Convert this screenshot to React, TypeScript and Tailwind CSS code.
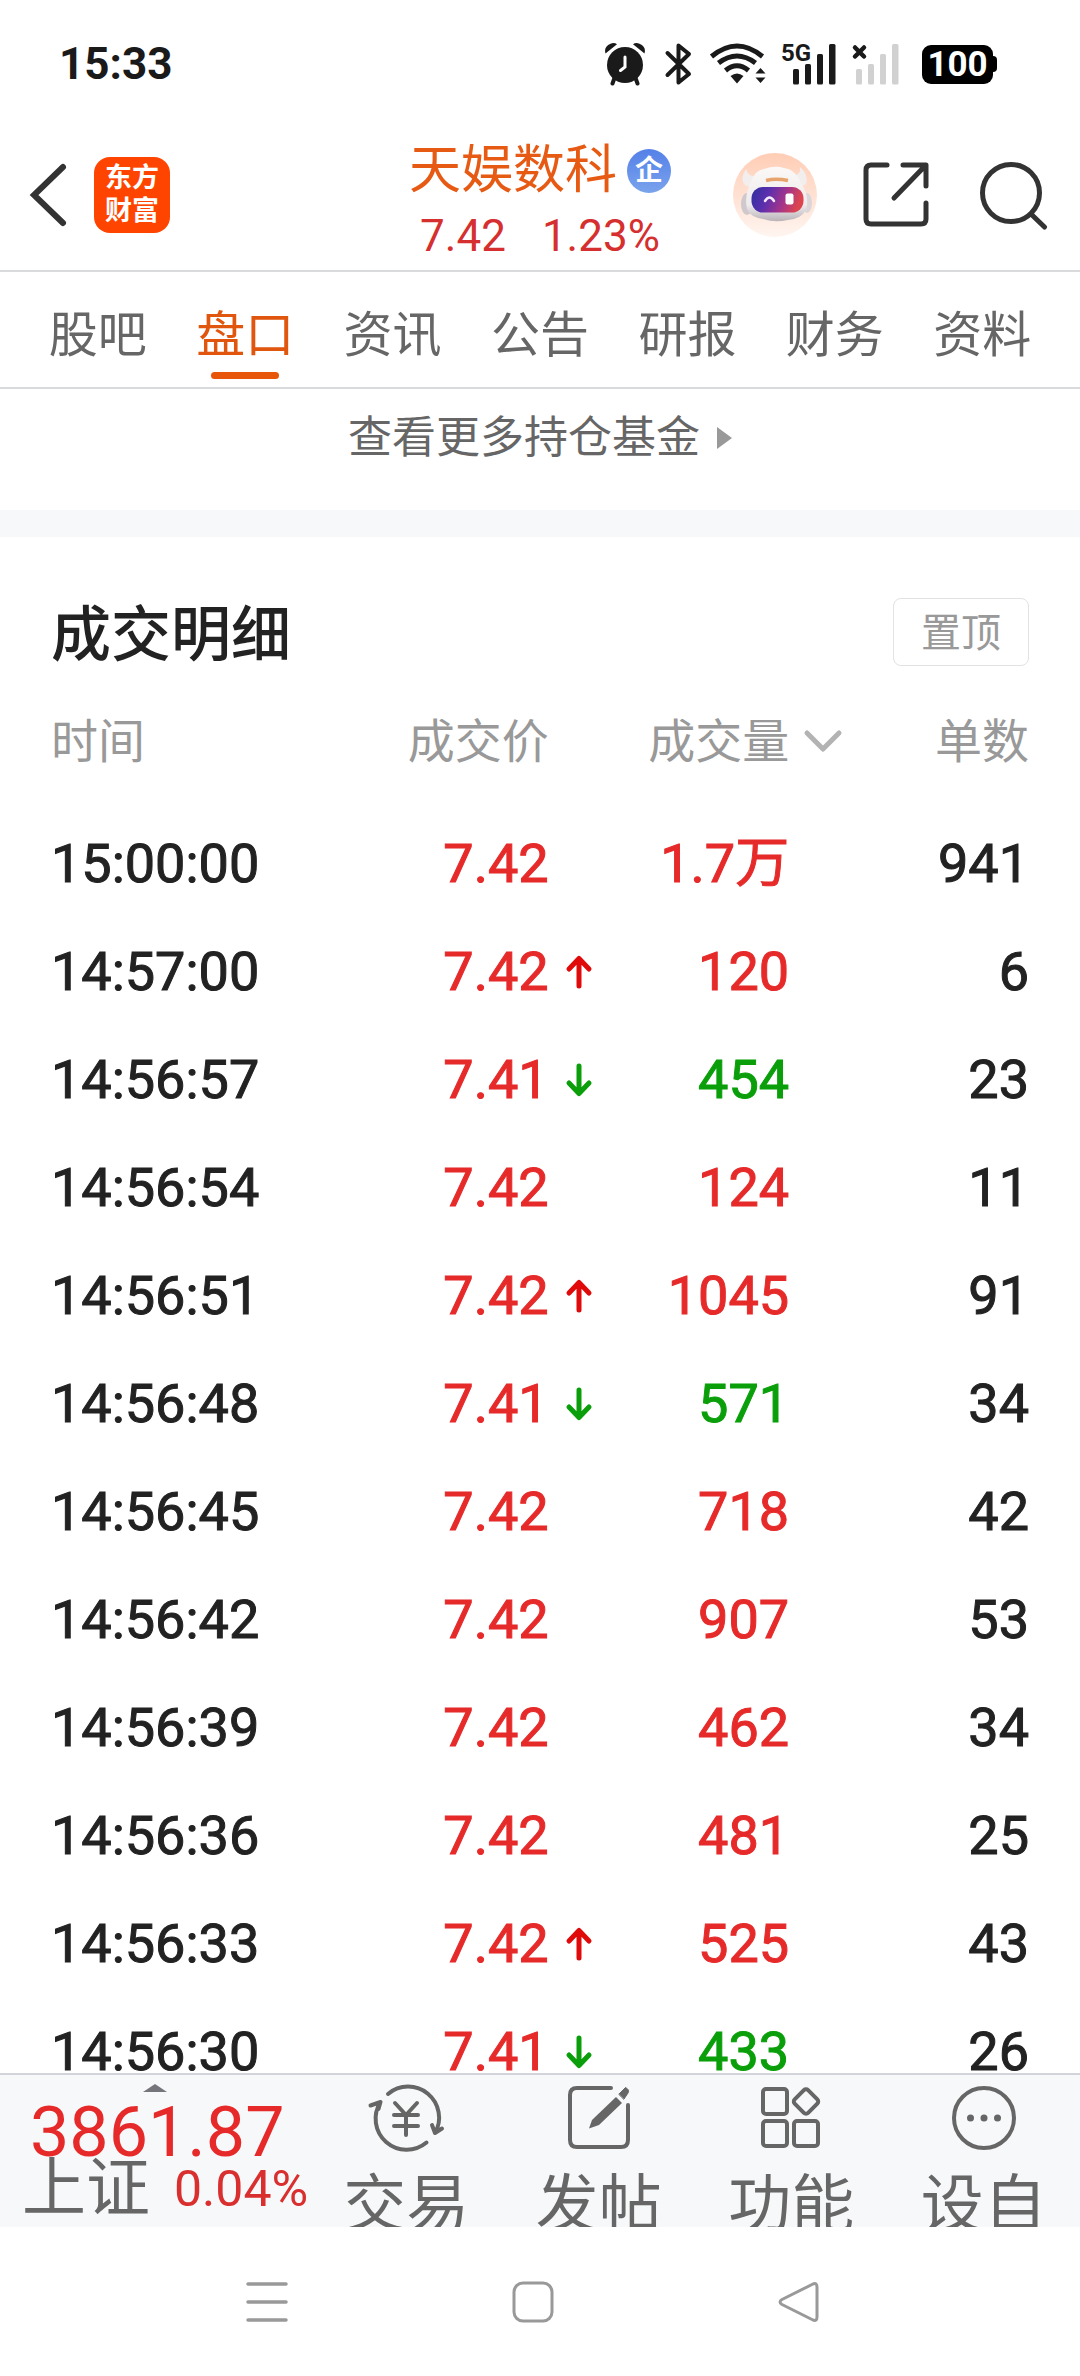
import type { ReactNode } from "react";

const FONT = "font-[Roboto,'Noto_Sans_CJK_SC',sans-serif]";

type Move = "up" | "down" | "flat";

interface Trade {
  time: string;
  price: string;
  move: Move;
  volume: string;
  sell?: boolean;
  count: number;
}

const trades: Trade[] = [
  { time: "15:00:00", price: "7.42", move: "flat", volume: "1.7万", count: 941 },
  { time: "14:57:00", price: "7.42", move: "up", volume: "120", count: 6 },
  { time: "14:56:57", price: "7.41", move: "down", volume: "454", sell: true, count: 23 },
  { time: "14:56:54", price: "7.42", move: "flat", volume: "124", count: 11 },
  { time: "14:56:51", price: "7.42", move: "up", volume: "1045", count: 91 },
  { time: "14:56:48", price: "7.41", move: "down", volume: "571", sell: true, count: 34 },
  { time: "14:56:45", price: "7.42", move: "flat", volume: "718", count: 42 },
  { time: "14:56:42", price: "7.42", move: "flat", volume: "907", count: 53 },
  { time: "14:56:39", price: "7.42", move: "flat", volume: "462", count: 34 },
  { time: "14:56:36", price: "7.42", move: "flat", volume: "481", count: 25 },
  { time: "14:56:33", price: "7.42", move: "up", volume: "525", count: 43 },
  { time: "14:56:30", price: "7.41", move: "down", volume: "433", sell: true, count: 26 },
];

const tabs = ["股吧", "盘口", "资讯", "公告", "研报", "财务", "资料"];

function AlarmIcon() {
  return (
    <svg width="42" height="44" viewBox="0 0 42 44" fill="#1a1a1a" aria-hidden="true">
      <circle cx="21" cy="23" r="18" />
      <path d="M1.5 11.5Q-.5 5 6.500 1.800Q10 0 13 2.200Z" />
      <path d="M40.500 11.500Q42.500 5 35.500 1.800Q32 0 29 2.200Z" />
      <path d="M10.500 36L8.500 41.500M31.500 36L33.500 41.500" stroke="#1a1a1a" strokeWidth="4" strokeLinecap="round" />
      <path d="M21 15V25L16.500 28.500" fill="none" stroke="#fff" strokeWidth="3" strokeLinecap="round" />
    </svg>
  );
}

function BluetoothIcon() {
  return (
    <svg width="28" height="44" viewBox="0 0 28 44" fill="none" stroke="#1a1a1a" strokeWidth="4" strokeLinecap="round" strokeLinejoin="round" aria-hidden="true">
      <path d="M3.500 11L25 32L14.500 40.500V3.500L25 12L3.500 33" />
    </svg>
  );
}

function WifiIcon() {
  return (
    <svg width="58" height="44" viewBox="0 0 58 44" fill="none" stroke="#1a1a1a" strokeWidth="5" aria-hidden="true">
      <path d="M2.500 14.500Q28 -6.500 53.500 14.500" />
      <path d="M9.500 21Q28 7 46.500 21" />
      <path d="M16.500 28.500Q28 19 39.500 28.500" />
      <path d="M21.500 34Q28 29 34.500 34L28 41.500Z" fill="#1a1a1a" stroke="none" />
      <path d="M46.500 31.500L51.500 26L56.500 31.500ZM46.500 35.500H56.500L51.500 41Z" fill="#1a1a1a" stroke="none" />
    </svg>
  );
}

function SignalIcon({ active }: { active: boolean }) {
  return (
    <svg width={active ? 56 : 48} height="44" viewBox={active ? "0 0 56 44" : "8 0 48 44"} className="overflow-visible" aria-hidden="true">
      {active ? (
        <text x="0" y="19" fontSize="24" fontWeight="700" fill="#1a1a1a">5G</text>
      ) : (
        <path d="M11 5.500L20 14.500M20 5.500L11 14.500" stroke="#1a1a1a" strokeWidth="4.500" strokeLinecap="round" />
      )}
      <g fill={active ? "#1a1a1a" : "#d1d1d1"}>
        <rect x="12" y="27" width="6" height="15.500" rx="1.500" />
        <rect x="24" y="22" width="6" height="20.500" rx="1.500" />
        <rect x="36" y="12" width="6" height="30.500" rx="1.500" />
        <rect x="48" y="2" width="6.500" height="40.500" rx="1.500" />
      </g>
    </svg>
  );
}

function StatusBar() {
  return (
    <div className="flex h-32 shrink-0 items-center justify-between pr-[83px] pl-[59px] text-[#1a1a1a]">
      <span className="text-[44px] leading-none font-bold">15:33</span>
      <div className="flex items-center">
        <AlarmIcon />
        <span className="w-[18px]" />
        <BluetoothIcon />
        <span className="w-[17px]" />
        <WifiIcon />
        <span className="w-[14px]" />
        <SignalIcon active />
        <span className="w-[15px]" />
        <SignalIcon active={false} />
        <span className="w-[22px]" />
        <div className="flex items-center">
          <span className="flex h-[39px] w-[71px] items-center justify-center rounded-[9px] bg-black text-[35px] leading-none font-bold text-white">
            100
          </span>
          <span className="h-4 w-1 rounded-r-sm bg-black" />
        </div>
      </div>
    </div>
  );
}

function RobotAvatar() {
  return (
    <svg width="84" height="84" viewBox="0 0 84 84" aria-hidden="true">
      <defs>
        <linearGradient id="avatar-bg" x1="0" y1="0" x2="0" y2="1">
          <stop offset="0" stopColor="#ffcdb5" />
          <stop offset="1" stopColor="#fff5f0" />
        </linearGradient>
        <linearGradient id="avatar-head" x1="0" y1="0" x2="0" y2="1">
          <stop offset="0" stopColor="#fbf8f7" />
          <stop offset="0.700" stopColor="#efebed" />
          <stop offset="1" stopColor="#b9b3b8" />
        </linearGradient>
        <linearGradient id="avatar-visor" x1="0" y1="0" x2="1" y2="0.200">
          <stop offset="0" stopColor="#2f2f9f" />
          <stop offset="0.350" stopColor="#5a2fae" />
          <stop offset="0.700" stopColor="#a5348a" />
          <stop offset="1" stopColor="#dc4450" />
        </linearGradient>
      </defs>
      <circle cx="42" cy="42" r="42" fill="url(#avatar-bg)" />
      <ellipse cx="14" cy="51" rx="6" ry="11" fill="#cfc8cc" />
      <ellipse cx="74" cy="50" rx="5" ry="10" fill="#dcd6d9" />
      <path d="M13 16Q7 25 11 31Q16 36 21 31L23 23Q15 24 13 16Z" fill="#f3eeee" />
      <path d="M67 14Q76 22 73 31Q69 35 65 30L61 22Q68 22 67 14Z" fill="#f3eeee" />
      <path d="M18 29Q22 17 31 16Q42 12 51 15Q62 16 68 30Q77 44 73 57Q68 66 55 67Q42 70 30 66Q17 64 14 56Q11 43 18 29Z" fill="url(#avatar-head)" />
      <rect x="18.500" y="34" width="52" height="25.500" rx="11.500" fill="url(#avatar-visor)" />
      <path d="M33 27.500Q43 25 55 27.500" fill="none" stroke="#e8a36c" strokeWidth="3.500" />
      <path d="M32 48Q36.500 41 41 48" fill="none" stroke="#f2eaff" strokeWidth="2.500" strokeLinecap="round" />
      <rect x="52.500" y="40.500" width="8" height="11" rx="2" fill="#fff" />
    </svg>
  );
}

function Header() {
  return (
    <header className="grid h-36 shrink-0 grid-cols-[1fr_auto_1fr] items-center border-b-2 border-[#d8dadb]">
      <div className="flex items-center pb-2 pl-[29px]">
        <button type="button" aria-label="返回">
          <svg width="40" height="66" viewBox="0 0 40 66" fill="none" stroke="#333" strokeWidth="6" strokeLinecap="round">
            <path d="M34 5L5 33L34 61" />
          </svg>
        </button>
        <a
          href="#home"
          className="ml-[25px] flex h-[76px] w-[76px] flex-col items-center justify-center rounded-2xl bg-[#ff4400] text-[27px] leading-[33px] font-bold text-white"
        >
          <span>东方</span>
          <span>财富</span>
        </a>
      </div>
      <div className="flex flex-col items-center pt-2">
        <h1 className="flex items-center gap-2.5 text-[52px] leading-[66px] text-[#e65a14]">
          天娱数科
          <span className="flex h-11 w-11 items-center justify-center rounded-full bg-linear-to-b from-[#5580e8] to-[#7aa3ec] text-[28px] leading-none font-bold text-white">
            企
          </span>
        </h1>
        <p className="flex gap-9 text-[44px] leading-[64px] text-[#d62f2f]">
          <span>7.42</span>
          <span>1.23%</span>
        </p>
      </div>
      <div className="flex items-center justify-end pr-[31px] pb-2">
        <button type="button" aria-label="智能助手" className="mr-[45px]">
          <RobotAvatar />
        </button>
        <button type="button" aria-label="分享" className="mr-[49px]">
          <svg width="68" height="68" viewBox="0 0 68 68" fill="none" stroke="#333" strokeWidth="5" strokeLinecap="round" strokeLinejoin="round">
            <path d="M25 4H9Q4 4 4 9V58Q4 63 9 63H59Q64 63 64 58V42" />
            <path d="M41 4H64V25M63 5L32 37" />
          </svg>
        </button>
        <button type="button" aria-label="搜索">
          <svg width="70" height="70" viewBox="0 0 70 70" fill="none" stroke="#333" strokeWidth="5" strokeLinecap="round">
            <circle cx="32" cy="33" r="28.500" />
            <path d="M52 54L65.500 67" />
          </svg>
        </button>
      </div>
    </header>
  );
}

function TabBar() {
  return (
    <nav className="grid h-[117px] shrink-0 grid-cols-7 border-b-2 border-[#d8dadb] px-6">
      {tabs.map((tab) => {
        const active = tab === "盘口";
        return (
          <a
            key={tab}
            href={`#${tab}`}
            aria-current={active ? "page" : undefined}
            className={
              active
                ? "flex flex-col items-center justify-between pt-7 pb-2 text-[49px] leading-[72px] text-[#e0560f]"
                : "flex flex-col items-center justify-between pt-7 pb-2 text-[49px] leading-[72px] text-[#666]"
            }
          >
            {tab}
            <span className={active ? "h-[7px] w-[68px] rounded-full bg-[#e8560a]" : "h-[7px] w-[68px]"} />
          </a>
        );
      })}
    </nav>
  );
}

function MoveArrow({ move }: { move: Move }) {
  if (move === "flat") return null;
  return (
    <svg width="28" height="36" viewBox="0 0 28 36" fill="none" strokeWidth="5" strokeLinecap="round" strokeLinejoin="round" stroke={move === "up" ? "#e00a0a" : "#0a9f0a"} role="img" aria-label={move === "up" ? "上涨" : "下跌"}>
      {move === "up" ? <path d="M14 32V5M4 15L14 4.500L24 15" /> : <path d="M14 4V31M4 21L14 31.500L24 21" />}
    </svg>
  );
}

function TradeTable() {
  return (
    <table className="w-full table-fixed">
      <thead>
        <tr className="h-36 text-[47px] leading-[60px] text-[#999]">
          <th scope="col" className="w-[30%] pt-2 text-left font-normal">时间</th>
          <th scope="col" className="w-[26%] pt-2 pr-[50px] text-right font-normal">成交价</th>
          <th scope="col" className="w-[25%] pt-2 font-normal">
            <button type="button" className="flex w-full items-center justify-end">
              成交量
              <span className="flex w-[54px] justify-end">
                <svg width="40" height="26" viewBox="0 0 40 26" fill="none" stroke="#b3b3b3" strokeWidth="5" strokeLinecap="round" strokeLinejoin="round" aria-hidden="true">
                  <path d="M4 4L20 20L36 4" />
                </svg>
              </span>
            </button>
          </th>
          <th scope="col" className="pt-2 text-right font-normal">单数</th>
        </tr>
      </thead>
      <tbody className="[-webkit-text-stroke:1px]">
        {trades.map((t) => (
          <tr key={t.time} className="h-[108px] text-[54px] leading-[72px] text-[#222]">
            <td>{t.time}</td>
            <td className="text-[#e62a2a]">
              <div className="flex items-center justify-end">
                {t.price}
                <span className="flex w-[50px] justify-end pr-1.5">
                  <MoveArrow move={t.move} />
                </span>
              </div>
            </td>
            <td className={t.sell ? "pr-[54px] text-right text-[#0a9f0a]" : "pr-[54px] text-right text-[#e62a2a]"}>{t.volume}</td>
            <td className="text-right">{t.count}</td>
          </tr>
        ))}
      </tbody>
    </table>
  );
}

function BottomAction({ label, children }: { label: string; children: ReactNode }) {
  return (
    <button type="button" className="flex flex-1 flex-col items-center pt-2 text-[63px] leading-[72px] text-[#666]">
      <svg width="80" height="70" viewBox="0 0 80 70" fill="none" stroke="#666" strokeWidth="4" strokeLinecap="round" strokeLinejoin="round" className="mb-4 shrink-0" aria-hidden="true">
        {children}
      </svg>
      {label}
    </button>
  );
}

function BottomBar() {
  return (
    <div className="flex h-[154px] shrink-0 overflow-hidden border-t-2 border-[#d3d4db] bg-[#f7f8fa]">
      <button type="button" className="flex w-[310px] shrink-0 flex-col text-left whitespace-nowrap">
        <svg width="24" height="8" viewBox="0 0 24 8" className="mt-[9px] ml-[143px] shrink-0" aria-hidden="true">
          <path d="M0 8L12 0L24 8Z" fill="#75757b" />
        </svg>
        <span className="mt-3 pl-[30px] text-[70px] leading-[56px] text-[#e62a2a]">3861.87</span>
        <span className="flex items-center pl-[22px]">
          <span className="text-[64px] leading-[58px] text-[#666]">上证</span>
          <span className="pl-6 text-[50px] leading-[58px] text-[#d92f2f]">0.04%</span>
        </span>
      </button>
      <BottomAction label="交易">
        <path d="M22 11A31 31 0 0 1 69 50L76 45.500M69 50L66 42" />
        <path d="M60.500 59.500A31 31 0 0 1 14.500 19L4.500 22.500M14.500 19L12.500 26" />
        <path d="M29 20L40 32L51 20M28 32H52M28 43H52M40 32V52" />
      </BottomAction>
      <BottomAction label="发帖">
        <path d="M52 5H18Q11 5 11 12V57Q11 64 18 64H62Q69 64 69 57V22" />
        <path d="M57 14L63 20L40 42L30 45.500L33 37Z" fill="#666" stroke="none" />
        <path d="M60 11L66.500 4.500Q71 7 69 10L65 16Z" fill="#666" stroke="#666" strokeWidth="1" />
      </BottomAction>
      <BottomAction label="功能">
        <rect x="12" y="6" width="24" height="25" rx="3" />
        <rect x="12" y="38" width="24" height="25" rx="3" />
        <rect x="43" y="38" width="24" height="25" rx="3" />
        <rect x="45.500" y="9" width="19" height="19" rx="3" transform="rotate(45 55 18.500)" />
      </BottomAction>
      <BottomAction label="设自">
        <circle cx="40" cy="35" r="30" />
        <g fill="#666" stroke="none">
          <circle cx="26.500" cy="35" r="3.500" />
          <circle cx="40" cy="35" r="3.500" />
          <circle cx="53.500" cy="35" r="3.500" />
        </g>
      </BottomAction>
    </div>
  );
}

function SystemNav() {
  return (
    <div className="grid h-[149px] shrink-0 grid-cols-[1fr_auto_auto_auto_1fr] items-center gap-x-[222px] bg-white pr-3.5">
      <span />
      <button type="button" aria-label="最近任务">
        <svg width="44" height="44" viewBox="0 0 44 44" stroke="#999" strokeWidth="3.500" strokeLinecap="round">
          <path d="M3 4H41M3 22H41M3 40H41" />
        </svg>
      </button>
      <button type="button" aria-label="主屏幕">
        <svg width="44" height="44" viewBox="0 0 44 44" fill="none" stroke="#999" strokeWidth="3">
          <rect x="3" y="3" width="38" height="38" rx="9" />
        </svg>
      </button>
      <button type="button" aria-label="后退">
        <svg width="44" height="44" viewBox="0 0 44 44" fill="none" stroke="#999" strokeWidth="3" strokeLinejoin="round">
          <path d="M36 4Q40 2.500 40 7V37Q40 41.500 36 40L5 24.500Q1 22 5 19.500Z" />
        </svg>
      </button>
      <span />
    </div>
  );
}

export default function App() {
  return (
    <div className={`flex h-screen flex-col overflow-hidden bg-white ${FONT}`}>
      <StatusBar />
      <Header />
      <TabBar />
      <main className="min-h-0 flex-1 overflow-hidden">
        <a href="#funds" className="flex h-[121px] items-center justify-center gap-4 pb-6 text-[44px] leading-[60px] text-[#666]">
          查看更多持仓基金
          <svg width="16" height="22" viewBox="0 0 16 22" aria-hidden="true">
            <path d="M1 0L16 11L1 22Z" fill="#999" />
          </svg>
        </a>
        <div className="h-[27px] bg-[#f7f8fa]" />
        <section className="px-[51px] pt-[61px]">
          <div className="flex h-[68px] items-center justify-between">
            <h2 className="pt-2 text-[60px] leading-[68px] font-medium text-[#222]">成交明细</h2>
            <button type="button" className="h-[68px] w-[136px] rounded-lg border border-[#e2e2e2] pt-1 text-[40px] leading-[60px] text-[#999]">
              置顶
            </button>
          </div>
          <TradeTable />
        </section>
      </main>
      <BottomBar />
      <SystemNav />
    </div>
  );
}
